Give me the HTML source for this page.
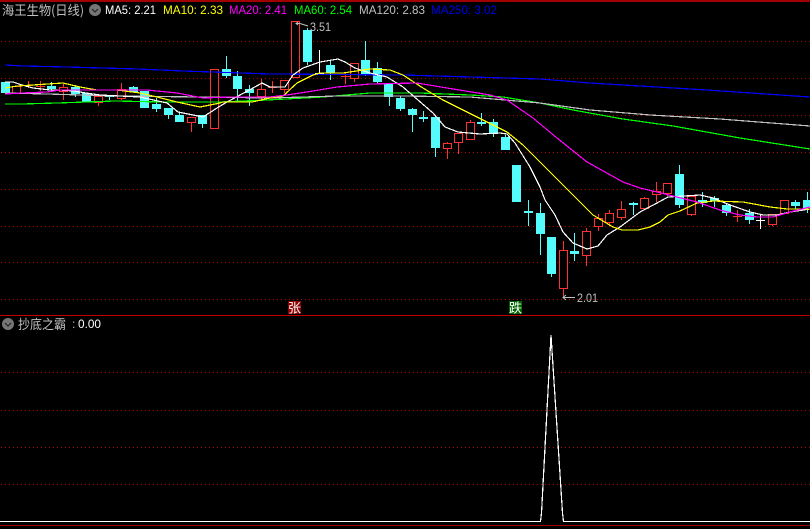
<!DOCTYPE html>
<html><head><meta charset="utf-8"><style>
html,body{margin:0;padding:0;background:#000;width:810px;height:529px;overflow:hidden}
svg{display:block}
text{font-family:"Liberation Sans","Noto Sans CJK SC",sans-serif;font-size:12px}
.c{font-family:"WenQuanYi Zen Hei","Noto Sans CJK SC",sans-serif;font-size:13px}
.l{fill:none;stroke-width:1.2;shape-rendering:crispEdges}
</style></head><body>
<svg width="810" height="529" viewBox="0 0 810 529" xmlns="http://www.w3.org/2000/svg">
<rect width="810" height="529" fill="#000"/>
<rect x="0" y="0" width="810" height="2" fill="#a00000"/>
<g stroke="#b00000" stroke-width="1" stroke-dasharray="1 3" shape-rendering="crispEdges">
<path d="M1 41.5H810M1 78.5H810M1 115.5H810M1 152.5H810M1 189.5H810M1 226.5H810M1 262.5H810M1 299.5H810M1 372.5H810M1 410.5H810M1 447.5H810M1 484.500H810"/>
</g>
<rect x="0" y="315" width="810" height="1" fill="#c00000"/>
<rect x="0" y="525" width="810" height="1" fill="#a00000"/>

<!-- red candles -->
<g shape-rendering="crispEdges">
<path stroke="#ff3232" fill="none" d="M16.5 86V93M28.5 81V88M24 85.5H33M40.5 81V91M36 86.5H45M63.5 84V100M98.5 96V106M121.5 83V100M191.5 117V132M261.5 79V100M272.5 81V93M268 87.5H277M284.5 80V93M345.5 73V84M341 76.5H350M354.5 63V82M447.5 142V159M458.5 133V154M470.5 120V139M563.5 241V298M586.5 228V266M598.5 214V231M609.5 210V226M621.5 201V220M644.5 197V209M656.5 182V202M667.5 183V196M691.5 196V216M737.5 210V222M733 216.5H742M772.5 214V226M784.5 200V213"/>
<g fill="#000" stroke="#ff3232">
<rect x="12.5" y="86.5" width="8" height="7"/>
<rect x="59.5" y="87.5" width="8" height="4"/>
<rect x="94.5" y="96.5" width="8" height="6"/>
<rect x="117.5" y="89.5" width="8" height="9"/>
<rect x="187.5" y="117.5" width="8" height="5"/>
<rect x="210.5" y="69.5" width="8" height="59"/>
<rect x="257.5" y="89.5" width="8" height="7"/>
<rect x="280.5" y="80.5" width="8" height="9"/>
<rect x="291.5" y="21.5" width="8" height="56"/>
<rect x="350.5" y="63.5" width="8" height="15"/>
<rect x="443.5" y="143.5" width="8" height="5"/>
<rect x="454.5" y="133.5" width="8" height="9"/>
<rect x="466.5" y="122.5" width="8" height="17"/>
<rect x="559.5" y="250.5" width="8" height="38"/>
<rect x="582.5" y="231.5" width="8" height="24"/>
<rect x="594.5" y="218.5" width="8" height="8"/>
<rect x="605.5" y="213.5" width="8" height="9"/>
<rect x="617.5" y="209.5" width="8" height="8"/>
<rect x="640.5" y="198.5" width="8" height="10"/>
<rect x="652.5" y="191.5" width="8" height="3"/>
<rect x="663.5" y="183.5" width="8" height="10"/>
<rect x="687.5" y="196.5" width="8" height="18"/>
<rect x="768.5" y="214.5" width="8" height="10"/>
<rect x="780.5" y="200.5" width="8" height="13"/>
</g>
<!-- white doji -->
<path stroke="#fff" fill="none" d="M319.5 50V73M315 73.5H324M760.5 214V229M756 220.5H765"/>
<!-- cyan wicks -->
<path stroke="#54fcfc" fill="none" d="M51.5 82V91M75.5 85V97M109.5 95V100M133.5 86V92M156.5 98V112M168.5 108V119M179.5 113V122M202.5 115V128M226.5 56V78M237.5 71V101M249.5 85V106M307.5 28V65M330.5 61V80M365.5 41V76M377.5 62V84M389.5 84V106M400.5 96V111M412.5 108V132M423.5 111V122M435.5 115V157M481.5 113V126M493.5 119V137M505.5 135V150M528.5 200V226M540.5 203V255M551.5 237V277M574.5 233V261M633.5 202V215M679.5 165V208M702.5 192V207M714.5 196V207M726.5 203V216M749.5 209V224M795.5 200V209M807.5 192V213"/>
<g fill="#54fcfc">
<rect x="1" y="82" width="9" height="11"/>
<rect x="47" y="86" width="9" height="3"/>
<rect x="71" y="87" width="9" height="7"/>
<rect x="82" y="93" width="9" height="9"/>
<rect x="105" y="95" width="9" height="2"/>
<rect x="129" y="87" width="9" height="5"/>
<rect x="140" y="91" width="9" height="17"/>
<rect x="152" y="104" width="9" height="5"/>
<rect x="164" y="108" width="9" height="7"/>
<rect x="175" y="115" width="9" height="7"/>
<rect x="198" y="115" width="9" height="9"/>
<rect x="222" y="69" width="9" height="7"/>
<rect x="233" y="76" width="9" height="13"/>
<rect x="245" y="89" width="9" height="4"/>
<rect x="303" y="30" width="9" height="32"/>
<rect x="326" y="65" width="9" height="8"/>
<rect x="361" y="60" width="9" height="15"/>
<rect x="373" y="68" width="9" height="14"/>
<rect x="384" y="84" width="9" height="13"/>
<rect x="396" y="98" width="9" height="11"/>
<rect x="408" y="109" width="9" height="6"/>
<rect x="419" y="117" width="9" height="2"/>
<rect x="431" y="117" width="9" height="31"/>
<rect x="477" y="122" width="9" height="2"/>
<rect x="489" y="122" width="9" height="12"/>
<rect x="501" y="137" width="9" height="13"/>
<rect x="512" y="165" width="9" height="37"/>
<rect x="524" y="211" width="9" height="2"/>
<rect x="536" y="213" width="9" height="21"/>
<rect x="547" y="237" width="9" height="37"/>
<rect x="570" y="251" width="9" height="3"/>
<rect x="629" y="203" width="9" height="2"/>
<rect x="675" y="174" width="9" height="31"/>
<rect x="698" y="200" width="9" height="3"/>
<rect x="710" y="198" width="9" height="3"/>
<rect x="722" y="205" width="9" height="8"/>
<rect x="745" y="213" width="9" height="7"/>
<rect x="791" y="202" width="9" height="4"/>
<rect x="803" y="200" width="7" height="8"/>
</g>
</g>

<!-- MA lines -->
<polyline class="l" stroke="#0000ff" points="5,65 23,66 67,67 138,69 183,71 270,74 403,75 540,79 590,83 640,86 707,90 810,97"/>
<polyline class="l" stroke="#00ff00" points="5,104 22,104 57,103 115,101 163,102 220,102 267,100 323,97 370,93 420,93 470,95 503,97 540,103 573,110 623,119 673,126 740,138 810,149"/>
<polyline class="l" stroke="#c0c0c0" points="5,93 47,94 115,96 200,97 270,98 337,96 403,96 470,97 540,103 590,110 650,115 720,119 810,126"/>
<polyline class="l" stroke="#ffffff" points="5,82 13,82 22,85 33,88 50,90 60,90 74,91 86,93 100,95 140,97 167,103 178,112 193,115 203,117 217,108 227,102 240,95 253,88 262,83 270,87 285,87 293,75 303,68 320,62 338,59 345,62 355,68 370,73 387,77 403,87 418,100 433,113 445,127 458,132 480,134 500,133 507,134 515,143 530,167 540,187 545,200 555,215 563,232 573,243 587,249 598,246 607,235 620,227 640,212 657,203 668,197 700,195 713,198 730,205 750,212 763,215 777,215 790,212 810,209"/>
<polyline class="l" stroke="#ffff00" points="5,88 17,86 33,85 63,83 80,87 97,90 117,90 140,93 157,97 177,102 200,107 220,103 223,102 252,102 270,98 283,96 297,83 313,75 320,73 343,73 370,69 390,70 403,75 423,88 443,100 483,120 507,132 523,145 543,165 568,190 593,215 613,227 622,230 638,230 650,227 660,222 668,215 680,211 697,203 713,201 743,202 770,207 787,209 810,209"/>
<polyline class="l" stroke="#ff00ff" points="5,94 22,93 47,92 60,90 115,90 147,90 177,93 203,98 230,97 270,97 287,95 313,91 337,87 370,84 417,83 447,88 490,95 507,100 533,118 557,138 587,162 623,182 640,188 657,192 673,196 697,202 720,210 740,215 757,217 773,217 790,212 810,207"/>

<!-- lower panel -->
<polyline fill="none" stroke="#fff" stroke-width="1.2" shape-rendering="crispEdges" points="0,521.5 540.5,521.5 541.5,513 551,335 562.500,513 563.5,521.5 810,521.5"/>

<!-- header -->
<text class="c" x="2" y="15" fill="#c0c0c0" textLength="82" lengthAdjust="spacingAndGlyphs">海王生物(日线)</text>
<circle cx="95" cy="10" r="6" fill="#767676"/>
<path d="M92 9l3 3 3-3" stroke="#222" fill="none" stroke-width="1.2"/>
<text x="105" y="14" fill="#fff" textLength="51" lengthAdjust="spacingAndGlyphs">MA5: 2.21</text>
<text x="163" y="14" fill="#ffff00" textLength="60" lengthAdjust="spacingAndGlyphs">MA10: 2.33</text>
<text x="229" y="14" fill="#ff00ff" textLength="58" lengthAdjust="spacingAndGlyphs">MA20: 2.41</text>
<text x="294" y="14" fill="#00ff00" textLength="58" lengthAdjust="spacingAndGlyphs">MA60: 2.54</text>
<text x="359" y="14" fill="#c0c0c0" textLength="66" lengthAdjust="spacingAndGlyphs">MA120: 2.83</text>
<text x="431" y="14" fill="#0000e6" textLength="66" lengthAdjust="spacingAndGlyphs">MA250: 3.02</text>

<!-- annotations -->
<path d="M296 23.5H300M298 22l-2 1.5 2 1.5M300 23.5L308 26" stroke="#c0c0c0" fill="none" stroke-width="1"/>
<text x="310" y="31" fill="#c0c0c0" textLength="21" lengthAdjust="spacingAndGlyphs">3.51</text>
<path d="M563 297.5H575M566 295l-3 2.500 3 2.500" stroke="#c0c0c0" fill="none" stroke-width="1"/>
<text x="577" y="302" fill="#c0c0c0" textLength="21" lengthAdjust="spacingAndGlyphs">2.01</text>

<rect x="288" y="301" width="13" height="13" fill="#8b0000"/>
<text class="c" x="288" y="312.500" fill="#fff">张</text>
<rect x="509" y="301" width="13" height="13" fill="#006400"/>
<text class="c" x="509" y="312.500" fill="#fff">跌</text>

<!-- lower title -->
<circle cx="8" cy="324" r="6" fill="#767676"/>
<path d="M5 323l3 3 3-3" stroke="#222" fill="none" stroke-width="1.200"/>
<text class="c" x="18" y="329" fill="#c0c0c0" textLength="48" lengthAdjust="spacingAndGlyphs">抄底之霸</text>
<text x="72" y="328" fill="#c0c0c0">:</text>
<text x="78" y="328" fill="#fff" textLength="23" lengthAdjust="spacingAndGlyphs">0.00</text>
</svg>
</body></html>
